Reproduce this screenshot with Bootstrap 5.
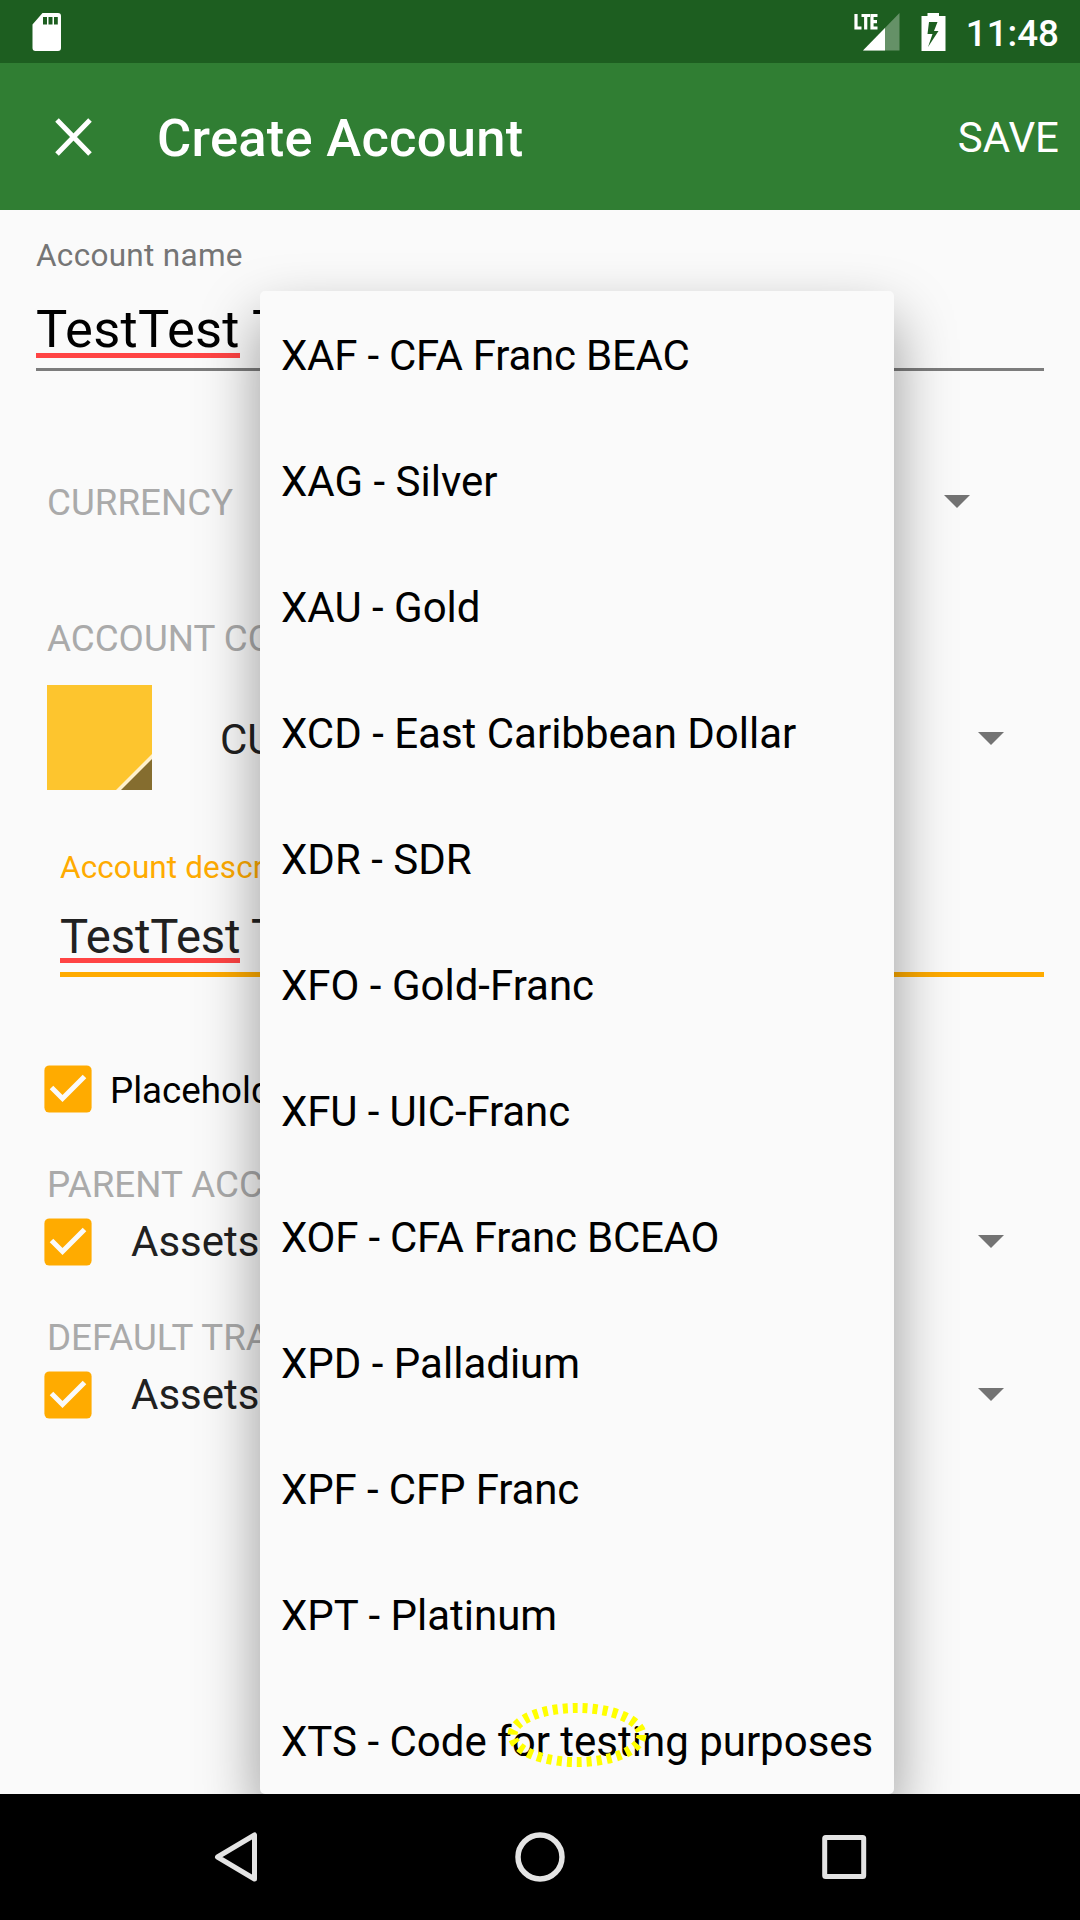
<!DOCTYPE html>
<html lang="en">
<head>
<meta charset="utf-8">
<meta name="viewport" content="width=device-width, initial-scale=1">
<title>Create Account</title>
<link href="https://cdn.jsdelivr.net/npm/bootstrap@5.3.0/dist/css/bootstrap.min.css" rel="stylesheet">
<style>
  body { font-family: Roboto, "Noto Sans", sans-serif; background: #fafafa; color: #212121; height: 1920px; overflow: hidden; }
  svg { display: block; flex: none; }
  .status-bar { height: 63px; background: #1d5e20; padding: 0 21px 0 32px; color: #fff; flex: none; }
  .battery { margin-left: 21px; }
  .clock { font-size: 36.75px; font-weight: 500; line-height: 40px; padding-top: 4px; margin-left: 20px; }
  .app-bar { height: 147px; background: #307e33; color: #fff; padding: 0 21px 0 55px; flex: none; }
  .app-title { font-size: 52.5px; font-weight: 500; line-height: 60px; margin-left: 65px; padding-top: 3px; letter-spacing: .27px; }
  .save-btn { font-size: 42px; line-height: 48px; padding-top: 2px; }
  .form-area { height: 1584px; overflow: hidden; flex: none; }
  .field-name { padding: 26px 36px 0; }
  .field-desc { padding: 58px 36px 0 60px; }
  .float-label { font-size: 31.5px; line-height: 40px; color: #757575; letter-spacing: .3px; }
  .field-desc .float-label { color: #ffab00; letter-spacing: .1px; }
  .line-input { white-space: pre; line-height: 60px; }
  .name-input { height: 72px; margin-top: 23px; font-size: 52.5px; color: #000; border-bottom: 3px solid #7c7c7c; letter-spacing: .25px; }
  .desc-input { height: 70px; margin-top: 19px; font-size: 47.25px; border-bottom: 5px solid #ffab00; letter-spacing: -.15px; }
  .typo { display: inline-block; background: linear-gradient(#ff4444, #ff4444) no-repeat 0 54px / 100% 5px; }
  .desc-input .typo { background-position: 0 51px; }
  .caption { font-size: 36.75px; line-height: 40px; color: #aaa; padding-left: 47px; white-space: nowrap; }
  .currency-row { margin-top: 112px; padding-right: 110px; }
  .currency-row svg { margin-bottom: 4px; }
  .color-caption { margin-top: 96px; }
  .spin-row { padding-right: 76px; }
  .color-row { height: 105px; margin-top: 26px; padding-left: 47px; }
  .color-row span { font-size: 42px; margin-left: 68px; line-height: 48px; padding-top: 5px; }
  .color-row .ms-auto { margin-top: 2px; }
  .check-row { height: 48px; padding-left: 44px; }
  .place-row { margin-top: 88px; }
  .place-row span { font-size: 36.75px; color: #000; margin-left: 18px; line-height: 44px; padding-top: 3px; }
  .group-caption { margin-top: 52px; }
  .asset-row { margin-top: 13px; }
  .asset-row span { font-size: 42px; margin-left: 39px; line-height: 48px; }
  .asset-row .ms-auto { margin-bottom: 2px; }
  .currency-menu { left: 260px; top: 81px; width: 634px; height: 1503px; background: #fafafa; border-radius: 5px; padding-top: 2px; box-shadow: 0 28px 60px rgba(0,0,0,.4); }
  .menu-clip { top: 210px; left: 0; width: 1080px; height: 1584px; overflow: hidden; }
  .currency-item { height: 126px; line-height: 126px; padding-left: 21px; font-size: 42px; color: #000; white-space: nowrap; }
  .kern-a { letter-spacing: -.24px; }
  .kern-b { letter-spacing: -.13px; }
  .tap-ring { left: 500px; top: 1695px; }
  .nav-strip { height: 126px; background: #000; flex: none; padding: 0 212px; }
  .home-key { margin-right: 2px; }
</style>
<script src="https://cdn.jsdelivr.net/npm/bootstrap@5.3.0/dist/js/bootstrap.bundle.min.js"></script>
</head>
<body class="d-flex flex-column position-relative">
<svg width="0" height="0" class="position-absolute">
  <defs>
    <symbol id="caret" viewBox="0 0 26 13"><path d="M0 0h26L13 13z" fill="#737373"/></symbol>
    <symbol id="tick" viewBox="0 0 48 48"><rect x=".4" y=".4" width="47.2" height="47.2" rx="5" fill="#ffab00"/><path d="M7.5 22.5 18.5 33.5 40.5 11.5" fill="none" stroke="#fafafa" stroke-width="5"/></symbol>
  </defs>
</svg>

<header class="status-bar d-flex align-items-center">
  <svg width="31" height="38" viewBox="0 0 31 38"><path transform="translate(-1.5)" fill="#fff" fill-rule="evenodd" d="M12 0H27.500q3 0 3 3V35q0 3-3 3H5q-3 0-3-3V11.500zM12.500 4v7.500h4V4zM18 4v7.500h4V4zM23.500 4v7.500h3.800V4z"/></svg>
  <svg class="ms-auto" width="46" height="38" viewBox="0 0 46 38">
    <path d="M45.500 0V37.500H9z" fill="#fff" opacity=".32"/>
    <path d="M31 15V37.500H9z" fill="#fff"/>
    <path d="M2 1V15H7.500M7.500 2.500H16M11.700 2.500V16.500M23.500 2.500H18V15H23.500M18 8.700H23" fill="none" stroke="#fff" stroke-width="3.200"/>
  </svg>
  <svg class="battery" width="25" height="38" viewBox="0 0 25 38"><path fill="#fff" fill-rule="evenodd" d="M6.500 0H18V3H24.500V38H.5V3H6.500zM8 9 6.500 21H11.500L7 34 17.500 18H13L16.500 9z"/></svg>
  <span class="clock">11:48</span>
</header>

<nav class="app-bar d-flex align-items-center">
  <svg width="37" height="38" viewBox="0 0 37 38"><path d="M2 2 35 36M35 2 2 36" stroke="#fff" stroke-width="5" fill="none"/></svg>
  <span class="app-title">Create Account</span>
  <span class="save-btn ms-auto">SAVE</span>
</nav>

<main class="form-area">
  <section class="field-name">
    <div class="float-label">Account name</div>
    <div class="line-input name-input"><span class="typo">TestTest</span> T</div>
  </section>
  <div class="currency-row d-flex justify-content-between align-items-center">
    <span class="caption">CURRENCY</span>
    <svg width="26" height="13"><use href="#caret"/></svg>
  </div>
  <div class="caption color-caption">ACCOUNT CO</div>
  <div class="color-row spin-row d-flex align-items-center">
    <svg width="105" height="105" viewBox="0 0 105 105"><path d="M0 0H105V105H0z" fill="#fdc52e"/><path d="M105 69V105H69z" fill="#fff1cc"/><path d="M105 74V105H74z" fill="#856d2f"/></svg>
    <span>CU</span>
    <svg class="ms-auto" width="26" height="13"><use href="#caret"/></svg>
  </div>
  <section class="field-desc">
    <div class="float-label">Account descr</div>
    <div class="line-input desc-input"><span class="typo">TestTest</span> T</div>
  </section>
  <div class="check-row place-row d-flex align-items-center">
    <svg width="48" height="48"><use href="#tick"/></svg>
    <span>Placehold</span>
  </div>
  <div class="caption group-caption">PARENT ACC</div>
  <div class="check-row asset-row spin-row d-flex align-items-center">
    <svg width="48" height="48"><use href="#tick"/></svg>
    <span>Assets</span>
    <svg class="ms-auto" width="26" height="13"><use href="#caret"/></svg>
  </div>
  <div class="caption group-caption">DEFAULT TRA</div>
  <div class="check-row asset-row spin-row d-flex align-items-center">
    <svg width="48" height="48"><use href="#tick"/></svg>
    <span>Assets</span>
    <svg class="ms-auto" width="26" height="13"><use href="#caret"/></svg>
  </div>
</main>

<footer class="nav-strip d-flex align-items-center justify-content-between">
  <svg width="48" height="54" viewBox="0 0 48 54"><path d="M42.500 5V49L5.500 27z" fill="none" stroke="#e4e4e4" stroke-width="5" stroke-linejoin="round"/></svg>
  <svg class="home-key" width="50" height="50" viewBox="0 0 50 50"><circle cx="25" cy="25" r="22" fill="none" stroke="#e4e4e4" stroke-width="5.500"/></svg>
  <svg width="46" height="46" viewBox="0 0 46 46"><rect x="2.700" y="3.500" width="39" height="39" rx="1" fill="none" stroke="#e4e4e4" stroke-width="5"/></svg>
</footer>

<div class="menu-clip position-absolute">
  <div class="currency-menu position-absolute">
    <div class="currency-item kern-a">XAF - CFA Franc BEAC</div>
    <div class="currency-item">XAG - Silver</div>
    <div class="currency-item">XAU - Gold</div>
    <div class="currency-item">XCD - East Caribbean Dollar</div>
    <div class="currency-item">XDR - SDR</div>
    <div class="currency-item">XFO - Gold-Franc</div>
    <div class="currency-item kern-b">XFU - UIC-Franc</div>
    <div class="currency-item kern-a">XOF - CFA Franc BCEAO</div>
    <div class="currency-item">XPD - Palladium</div>
    <div class="currency-item kern-b">XPF - CFP Franc</div>
    <div class="currency-item">XPT - Platinum</div>
    <div class="currency-item">XTS - Code for testing purposes</div>
  </div>
</div>
<svg class="tap-ring position-absolute" width="154" height="80" viewBox="0 0 154 80"><ellipse cx="77" cy="40" rx="64.500" ry="27" fill="none" stroke="#ff0" stroke-width="10" stroke-dasharray="5 5"/></svg>
</body>
</html>
